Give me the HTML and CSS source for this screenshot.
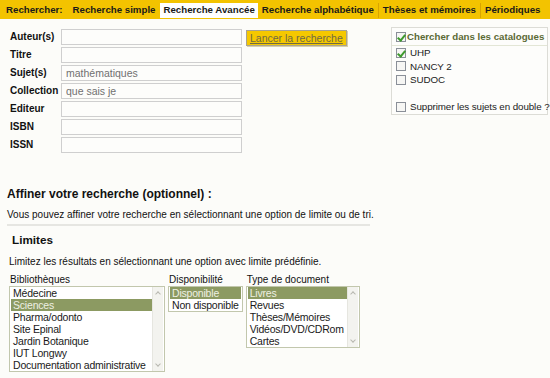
FILE: index.html
```html
<!DOCTYPE html>
<html lang="fr">
<head>
  <meta charset="UTF-8" />
  <title>Recherche Avancée</title>
  <link rel="stylesheet" href="styles.css">
</head>
<body>
  <div class="nav">
    <span class="nav-title">Rechercher:</span>
    <a class="nav-item">Recherche simple</a>
    <a class="nav-item active">Recherche Avancée</a>
    <a class="nav-item">Recherche alphabétique</a>
    <a class="nav-item sep">Thèses et mémoires</a>
    <a class="nav-item sep">Périodiques</a>
  </div>

  <div class="search">
    <div class="fields">
      <label class="field-label">Auteur(s)</label><input class="field" type="text">
      <label class="field-label">Titre</label><input class="field" type="text">
      <label class="field-label">Sujet(s)</label><input class="field" type="text" value="mathématiques">
      <label class="field-label">Collection</label><input class="field" type="text" value="que sais je">
      <label class="field-label">Editeur</label><input class="field" type="text">
      <label class="field-label">ISBN</label><input class="field" type="text">
      <label class="field-label">ISSN</label><input class="field" type="text">
    </div>
    <div class="launch"><span class="launch-btn">Lancer la recherche</span></div>

    <div class="catalogs">
      <div class="cat-head"><span class="cb checked"></span>Chercher dans les catalogues</div>
      <div class="cat-row"><span class="cb checked"></span>UHP</div>
      <div class="cat-row"><span class="cb"></span>NANCY 2</div>
      <div class="cat-row"><span class="cb"></span>SUDOC</div>
      <div class="cat-row"></div>
      <div class="cat-row"><span class="cb"></span>Supprimer les sujets en double ?</div>
    </div>
  </div>

  <h2 class="refine-title">Affiner votre recherche (optionnel) :</h2>
  <p class="refine-text">Vous pouvez affiner votre recherche en sélectionnant une option de limite ou de tri.</p>

  <h3 class="limits-title">Limites</h3>
  <p class="limits-text">Limitez les résultats en sélectionnant une option avec limite prédéfinie.</p>

  <div class="limits">
    <div class="limit">
      <div class="limit-label">Bibliothèques</div>
      <div class="listbox libs">
        <div class="options">
          <div class="opt">Médecine</div>
          <div class="opt selected">Sciences</div>
          <div class="opt">Pharma/odonto</div>
          <div class="opt">Site Epinal</div>
          <div class="opt">Jardin Botanique</div>
          <div class="opt">IUT Longwy</div>
          <div class="opt">Documentation administrative</div>
        </div>
        <div class="scrollbar"><span class="arrow up"></span><span class="arrow down"></span></div>
      </div>
    </div>
    <div class="limit">
      <div class="limit-label">Disponibilité</div>
      <div class="listbox">
        <div class="options">
          <div class="opt selected">Disponible</div>
          <div class="opt">Non disponible</div>
        </div>
      </div>
    </div>
    <div class="limit">
      <div class="limit-label">Type de document</div>
      <div class="listbox types">
        <div class="options">
          <div class="opt selected">Livres</div>
          <div class="opt">Revues</div>
          <div class="opt">Thèses/Mémoires</div>
          <div class="opt">Vidéos/DVD/CDRom</div>
          <div class="opt">Cartes</div>
        </div>
        <div class="scrollbar"><span class="arrow up"></span><span class="arrow down"></span></div>
      </div>
    </div>
  </div>
</body>
</html>
```

FILE: styles.css
```css
body {
  margin: 0;
  background: #fcfcf9;
  font-family: 'Liberation Sans', Arial, sans-serif;
  font-size: 10px;
  color: #111;
  white-space: nowrap;
}

/* top bar */
.nav {
  display: flex;
  align-items: flex-end;
  height: 19px;
  background: #f3c300;
  font-weight: bold;
  font-size: 9.7px;
}

.nav-title,
.nav-item {
  flex-shrink: 0;
  height: 15px;
  line-height: 14px;
  padding: 0 4px;
  margin-bottom: 1px;
  color: #1a1a1a;
}

.nav-title {
  padding: 0 6px 0 6px;
}

.nav-item.active {
  background: #fff;
  margin-left: 1px;
  padding: 0 3px;
}

.nav-item.sep {
  border-left: 1px solid #d9a400;
}

/* search form */
.search {
  display: flex;
  align-items: flex-start;
  padding: 10px 2px 0 10px;
}

.fields {
  display: grid;
  grid-template-columns: 51px 181px;
  row-gap: 2px;
}

.field-label {
  font-weight: bold;
  line-height: 16px;
  height: 16px;
}

.field {
  box-sizing: border-box;
  height: 16px;
  margin: 0;
  padding: 0 4px;
  border: 1px solid #cfcfcf;
  background: #fdfdfb;
  font-family: inherit;
  font-size: 10.5px;
  color: #707070;
  outline: none;
}

.launch {
  padding: 1px 0 0 4px;
}

.launch-btn {
  display: inline-block;
  height: 14px;
  line-height: 14px;
  padding: 0 3px;
  background: #f5c800;
  border: 1px solid #a8a290;
  box-shadow: 1px 1px 0 #d8d0a8;
  font-size: 10.5px;
  color: #6f6a44;
  text-decoration: underline;
}

.catalogs {
  margin-left: auto;
  margin-top: -2px;
  width: 155px;
  border: 1px solid #dcdcd6;
  background: #fdfdfb;
}

.cat-head {
  display: flex;
  align-items: center;
  height: 17px;
  padding-left: 4px;
  border-bottom: 1px solid #e3e6d6;
  font-weight: bold;
  font-size: 9.7px;
  color: #5b6a34;
}

.cat-head .cb {
  margin-right: 1px;
}

.cat-row {
  display: flex;
  align-items: center;
  height: 13.5px;
  padding-left: 4px;
  font-size: 9.8px;
  letter-spacing: -0.1px;
  color: #222;
}

.cat-row .cb {
  margin-right: 4px;
}

.cb {
  box-sizing: border-box;
  display: inline-block;
  flex-shrink: 0;
  width: 10px;
  height: 10px;
  border: 1px solid #8a8f98;
  background: #f6f6f4;
  position: relative;
}

.cb.checked::after {
  content: '';
  position: absolute;
  left: 2px;
  top: 0;
  width: 3px;
  height: 6px;
  border: solid #3e9a2e;
  border-width: 0 2px 2px 0;
  transform: rotate(40deg);
}

/* refine */
.refine-title {
  margin: 33px 0 0 7px;
  font-size: 12px;
  font-weight: bold;
  line-height: 16px;
}

.refine-text {
  margin: 6px 0 0 7px;
  width: 363px;
  padding-bottom: 3px;
  border-bottom: 2px solid #e6e6e2;
  line-height: 13px;
}

.limits-title {
  margin: 6px 0 0 12px;
  font-size: 11.7px;
  font-weight: bold;
  line-height: 16px;
}

.limits-text {
  margin: 7px 0 0 9px;
  line-height: 13px;
}

.limits {
  display: flex;
  align-items: flex-start;
  gap: 3px;
  padding: 5px 0 0 9px;
}

.limit-label {
  line-height: 13px;
  margin-left: 1px;
}

.listbox {
  display: flex;
  border: 1px solid #c2c7ad;
  background: #fff;
  padding: 0 1px;
}

.libs .options {
  width: 141px;
  overflow: hidden;
}

.types .options {
  width: 99px;
}

.opt {
  height: 12px;
  line-height: 12px;
  padding: 0 2px;
  font-size: 10.5px;
  letter-spacing: -0.2px;
  color: #1a1a1a;
}

.opt.selected {
  background: #8c9a62;
  color: #eef0e2;
}

.scrollbar {
  position: relative;
  width: 10px;
  background: #f3f3ef;
  border-left: 1px solid #e6e6e0;
}

.arrow {
  position: absolute;
  left: 3px;
  width: 3px;
  height: 3px;
  border: solid #b8b8b0;
  border-width: 1px 0 0 1px;
}

.arrow.up {
  top: 5px;
  transform: rotate(45deg);
}

.arrow.down {
  bottom: 5px;
  transform: rotate(225deg);
}
```
